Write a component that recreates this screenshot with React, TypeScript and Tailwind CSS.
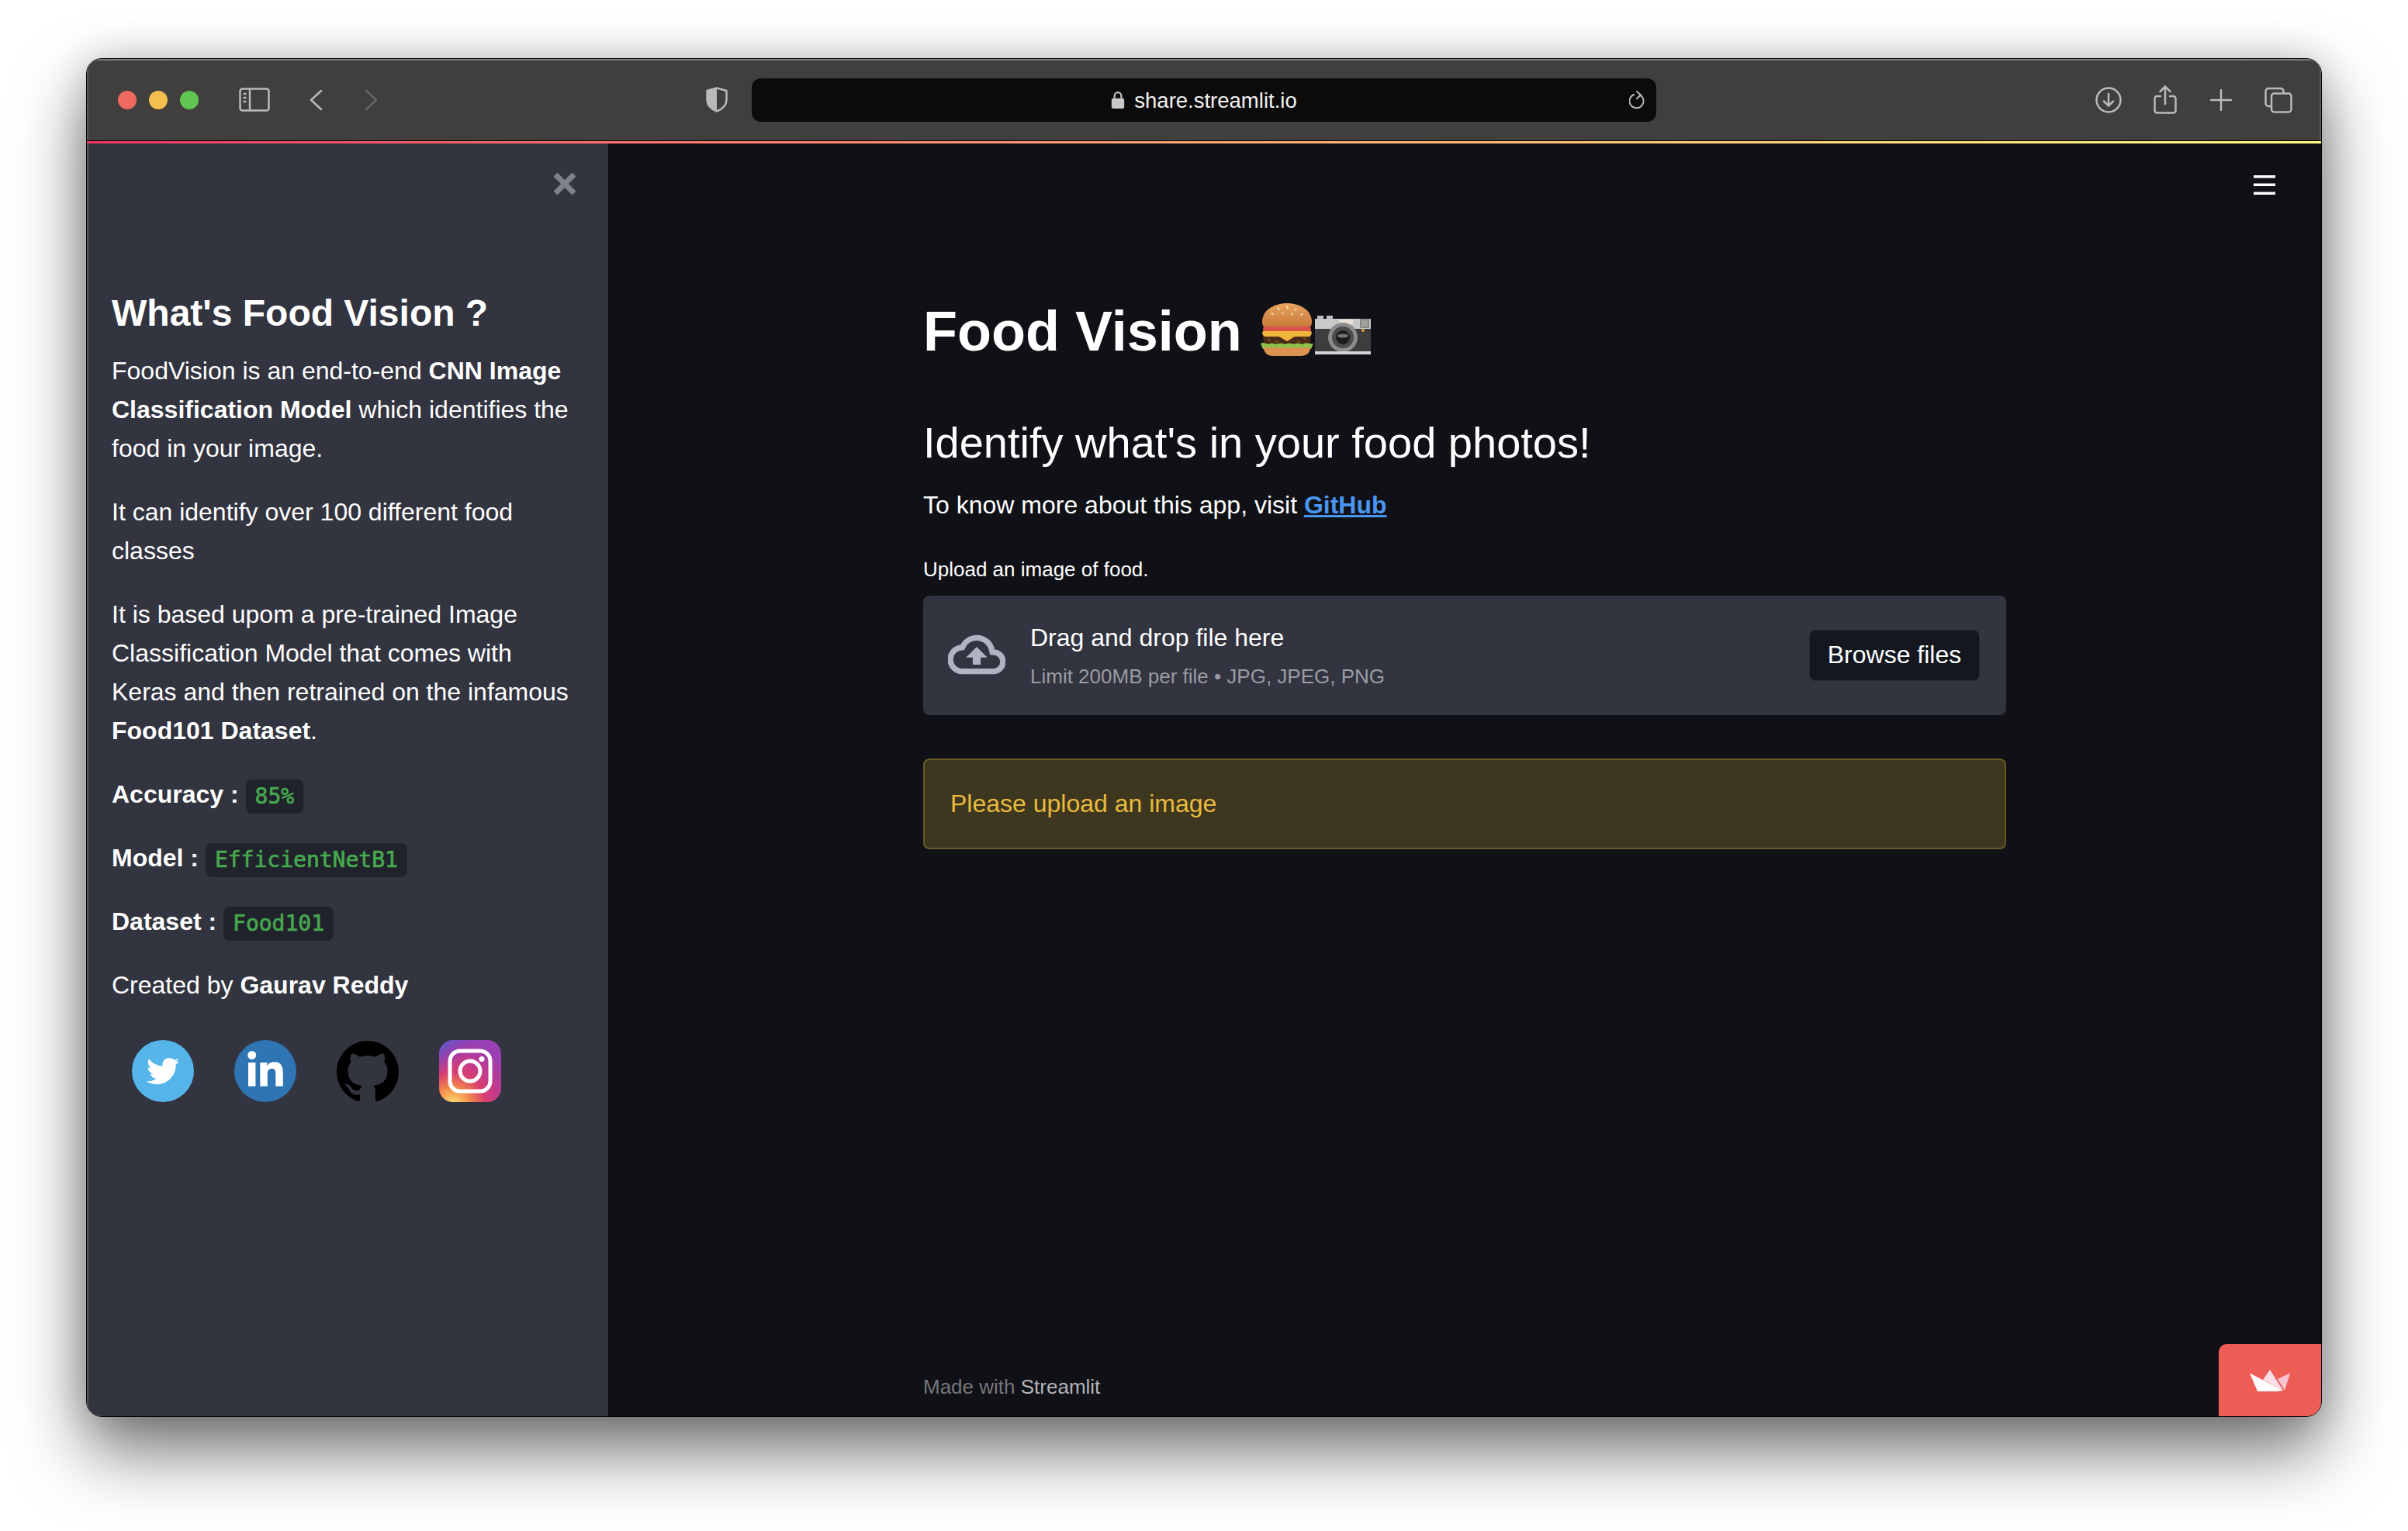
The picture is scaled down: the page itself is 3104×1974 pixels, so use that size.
import { FaLinkedinIn, FaTwitter } from "react-icons/fa";
import { SiGithub } from "react-icons/si";

const Toolbar = () => {
  return (
    <div className="flex h-[105px] shrink-0 items-center bg-[#403f3d] text-[#b9b9b9] shadow-[inset_0_2px_0_#7d7d7b,inset_2px_0_0_#5a5a58,inset_-2px_0_0_#5a5a58]">
      <div className="ml-[40px] flex gap-[16px]">
        <span className="h-6 w-6 rounded-full bg-[#ee6a5f]" />
        <span className="h-6 w-6 rounded-full bg-[#f5bf4f]" />
        <span className="h-6 w-6 rounded-full bg-[#61c554]" />
      </div>
      <svg className="ml-[52px]" width="40" height="31" viewBox="0 0 40 31" fill="none" stroke="currentColor" strokeWidth="2.5">
        <rect x="1.5" y="1.5" width="37" height="28" rx="3" />
        <path d="M14 2v27M5.5 8h4M5.5 13h4M5.5 18h4" />
      </svg>
      <svg className="ml-[50px]" width="18" height="28" viewBox="0 0 18 28" fill="none" stroke="currentColor" strokeWidth="2.5" strokeLinecap="round">
        <path d="M16 2 3 14l13 12" />
      </svg>
      <svg className="ml-[54px] text-[#666665]" width="18" height="28" viewBox="0 0 18 28" fill="none" stroke="currentColor" strokeWidth="2.5" strokeLinecap="round">
        <path d="m2 2 13 12L2 26" />
      </svg>
      <svg className="ml-[422px]" width="28" height="33" viewBox="0 0 28 33" fill="none">
        <path d="M14 1.5 26.5 5v12c0 7-5.5 11.5-12.5 14.5C7 28.5 1.5 24 1.5 17V5z" stroke="currentColor" strokeWidth="2.5" strokeLinejoin="round" />
        <path d="M14 1.5 1.5 5v12c0 7 5.5 11.5 12.5 14.5z" fill="currentColor" />
      </svg>
      <div className="relative ml-[31px] flex h-[56px] w-[1166px] items-center justify-center rounded-[12px] bg-[#0b0b0b]">
        <svg className="mr-[12px]" width="18" height="24" viewBox="0 0 16 22" fill="#c9c9c9">
          <path d="M3 9V6a5 5 0 0 1 10 0v3h-2V6a3 3 0 0 0-6 0v3z" />
          <rect x="0.5" y="9" width="15" height="12" rx="2" />
        </svg>
        <span className="pt-[2px] text-[27.5px] leading-[32px] text-[#f2f2f2]">share.streamlit.io</span>
        <svg className="absolute right-[14px] top-[16px]" width="21" height="25" viewBox="0 0 21 25" fill="none" stroke="currentColor" strokeWidth="2" strokeLinecap="round">
          <path d="M14 5.5a9 9 0 1 1-8-.5" />
          <path d="m10 1 5 4.5-5 4.5" />
        </svg>
      </div>
      <svg className="ml-[566px]" width="34" height="34" viewBox="0 0 34 34" fill="none" stroke="currentColor" strokeWidth="2.5" strokeLinecap="round">
        <circle cx="17" cy="17" r="15.5" />
        <path d="M17 9v15M11 18.5l6 6 6-6" />
      </svg>
      <svg className="ml-[41px]" width="30" height="37" viewBox="0 0 30 37" fill="none" stroke="currentColor" strokeWidth="2.5" strokeLinecap="round">
        <path d="M9 14H4.5A3 3 0 0 0 1.5 17v15.5a3 3 0 0 0 3 3h21a3 3 0 0 0 3-3V17a3 3 0 0 0-3-3H21" />
        <path d="M15 24V2M8.5 8 15 1.5 21.5 8" />
      </svg>
      <svg className="ml-[43px]" width="28" height="28" viewBox="0 0 28 28" fill="none" stroke="currentColor" strokeWidth="2.5" strokeLinecap="round">
        <path d="M14 1v26M1 14h26" />
      </svg>
      <svg className="ml-[42px]" width="36" height="34" viewBox="0 0 36 34" fill="none" stroke="currentColor" strokeWidth="2.5">
        <path d="M8 25H5a3.5 3.5 0 0 1-3.5-3.5v-16A3.5 3.5 0 0 1 5 2h16a3.5 3.5 0 0 1 3.5 3.5V8" />
        <rect x="9" y="8.5" width="25.5" height="24" rx="3.5" />
      </svg>
    </div>
  );
};

const InstagramIcon = () => {
  return (
    <svg width="80" height="80" viewBox="0 0 80 80">
      <defs>
        <radialGradient id="igWarm" cx="22%" cy="105%" r="105%">
          <stop offset="0" stopColor="#fde08a" />
          <stop offset="0.12" stopColor="#fbc060" />
          <stop offset="0.3" stopColor="#f0804e" />
          <stop offset="0.5" stopColor="#d93f72" />
          <stop offset="0.75" stopColor="#bc3a92" />
          <stop offset="1" stopColor="#9a3fb4" />
        </radialGradient>
        <linearGradient id="igBlue" x1="0" y1="0" x2="0.3" y2="0.35">
          <stop offset="0" stopColor="#4f5fd0" />
          <stop offset="1" stopColor="#7b3fc0" stopOpacity="0" />
        </linearGradient>
      </defs>
      <rect width="80" height="80" rx="18" fill="url(#igWarm)" />
      <rect width="80" height="80" rx="18" fill="url(#igBlue)" />
      <rect x="14" y="14" width="52" height="52" rx="13" fill="none" stroke="#fff" strokeWidth="5" />
      <circle cx="40" cy="40" r="13" fill="none" stroke="#fff" strokeWidth="5" />
      <circle cx="55" cy="24.5" r="3.5" fill="#fff" />
    </svg>
  );
};

const BurgerIcon = () => {
  return (
    <svg width="68" height="68" viewBox="0 0 68 68">
      <defs>
        <linearGradient id="bun" x1="0" y1="0" x2="0" y2="1">
          <stop offset="0" stopColor="#e8a35f" />
          <stop offset="1" stopColor="#c8783a" />
        </linearGradient>
      </defs>
      <path d="M2 24C2 9 17 0 34 0s32 9 32 24c0 6-3 8-7 8H9c-4 0-7-2-7-8z" fill="url(#bun)" />
      <path d="M22 6l2 2M34 4l1 3M46 7l-2 2M14 13l2 1M28 12l1 2M40 13l1 2M54 14l-2 1" stroke="#f8e6c8" strokeWidth="1.5" strokeLinecap="round" />
      <rect x="3" y="30" width="62" height="7" rx="3.5" fill="#d9534a" />
      <path d="M3 38h62l-1 17H4z" fill="#4a2a18" />
      <path d="M10 46l2 2M20 50l2-1M48 49l2 1M56 45l2 1" stroke="#7a4a2c" strokeWidth="2" strokeLinecap="round" />
      <path d="M3 36h62c2 2 0 7-3 7H44l-10 6-10-6H6c-3 0-5-5-3-7z" fill="#f2b53c" />
      <path d="M0 52c4-3 8 2 12 0s7 2 11 0 7 2 11 0 8 2 11 0 8 2 11 0 8 1 12 0l-3 7H3z" fill="#8ac24a" />
      <path d="M4 57h60c0 7-5 11-12 11H16C9 68 4 64 4 57z" fill="#dc9350" />
    </svg>
  );
};

const CameraIcon = () => {
  return (
    <svg width="72" height="50" viewBox="0 0 72 50">
      <rect x="3" y="0" width="8" height="6" fill="#bdbdbd" />
      <rect x="15" y="0" width="8" height="6" fill="#bdbdbd" />
      <rect x="0" y="4" width="72" height="46" rx="1" fill="#c9c9c9" />
      <rect x="0" y="17" width="72" height="29" fill="#3d3d3f" />
      <rect x="31" y="5" width="18" height="6" rx="1" fill="#e8e2d4" />
      <rect x="58" y="4" width="12" height="12" fill="#8a8a86" />
      <rect x="60" y="6" width="8" height="8" fill="#a3a39d" />
      <circle cx="62" cy="19" r="2" fill="#e0a030" />
      <circle cx="36" cy="28" r="19" fill="#8c8c8e" />
      <circle cx="36" cy="28" r="14" fill="#4c4c4e" />
      <circle cx="36" cy="28" r="9" fill="#1c1c1e" />
      <ellipse cx="36" cy="26" rx="7" ry="2.5" fill="#77777a" />
      <rect x="0" y="46" width="72" height="4" fill="#d4d4d4" />
    </svg>
  );
};

const Sidebar = () => {
  return (
    <aside className="flex w-[672px] shrink-0 flex-col bg-[#32343f] pl-[32px] pr-[40px] pt-[38px] text-[32px] leading-[50px] text-white shadow-[inset_2px_0_0_#55565f]">
      <div className="-mr-[12px] flex h-[28px] justify-end pr-[14px]">
        <svg width="28" height="28" viewBox="0 0 28 28" fill="none" stroke="#808289" strokeWidth="7">
          <path d="M2 2l24 24M26 2 2 26" />
        </svg>
      </div>
      <h2 className="mb-[20px] mt-[124px] text-[48px] font-bold leading-[58px]">What's Food Vision ?</h2>
      <p className="mb-8">
        FoodVision is an end-to-end <b>CNN Image Classification Model</b> which identifies the food in your image.
      </p>
      <p className="mb-8">It can identify over 100 different food classes</p>
      <p className="mb-8">
        It is based upom a pre-trained Image Classification Model that comes with Keras and then retrained on the infamous <b>Food101 Dataset</b>.
      </p>
      <p className="mb-8">
        <b>Accuracy : </b>
        <code className="inline-block h-11 rounded-lg bg-[#20232b] px-3 align-middle font-['DejaVu_Sans_Mono',monospace] text-[28px] leading-[44px] text-[#46a84e] [-webkit-text-stroke:0.7px_#46a84e]">85%</code>
      </p>
      <p className="mb-8">
        <b>Model : </b>
        <code className="inline-block h-11 rounded-lg bg-[#20232b] px-3 align-middle font-['DejaVu_Sans_Mono',monospace] text-[28px] leading-[44px] text-[#46a84e] [-webkit-text-stroke:0.7px_#46a84e]">EfficientNetB1</code>
      </p>
      <p className="mb-8">
        <b>Dataset : </b>
        <code className="inline-block h-11 rounded-lg bg-[#20232b] px-3 align-middle font-['DejaVu_Sans_Mono',monospace] text-[28px] leading-[44px] text-[#46a84e] [-webkit-text-stroke:0.7px_#46a84e]">Food101</code>
      </p>
      <p>
        Created by <b>Gaurav Reddy</b>
      </p>
      <div className="ml-[26px] mt-[46px] flex gap-[52px]">
        <span className="flex h-20 w-20 items-center justify-center rounded-full bg-[#55b4e8] text-white">
          <FaTwitter size={42} />
        </span>
        <span className="flex h-20 w-20 items-center justify-center rounded-full bg-[#2f75b3] text-white">
          <FaLinkedinIn size={52} />
        </span>
        <span className="flex h-20 w-20 items-center justify-center text-black">
          <SiGithub size={80} />
        </span>
        <InstagramIcon />
      </div>
    </aside>
  );
};

const Main = () => {
  return (
    <main className="relative flex min-w-0 flex-1 flex-col bg-[#101116] pl-[406px] pr-[406px] pt-[199px] text-white">
      <svg className="absolute right-[59px] top-[41px]" width="28" height="25" viewBox="0 0 28 25" fill="#fff">
        <rect width="28" height="3.5" />
        <rect y="10.5" width="28" height="3.5" />
        <rect y="21.5" width="28" height="3.5" />
      </svg>
      <h1 className="flex h-[86px] items-center text-[72px] font-bold leading-[86px]">
        Food Vision
        <span className="-mt-[4px] ml-[24px] flex items-end">
          <BurgerIcon />
          <span className="mb-[2px] ml-[2px] flex">
            <CameraIcon />
          </span>
        </span>
      </h1>
      <h2 className="mt-[67px] text-[56px] leading-[67px]">Identify what's in your food photos!</h2>
      <p className="mt-[22px] text-[32px] leading-[50.4px]">
        To know more about this app, visit{" "}
        <a className="font-bold text-[#4a96f0] underline">GitHub</a>
      </p>
      <label className="mt-[42px] text-[26px] leading-[32px]">Upload an image of food.</label>
      <div className="mt-[18px] flex h-[154px] items-center rounded-lg bg-[#32343f] pl-8 pr-[34px]">
        <svg className="-mt-[2px] text-[#b0b3c2]" width="74" height="74" viewBox="0 0 24 24" fill="currentColor" stroke="currentColor" strokeWidth="0.4">
          <path d="M19.35 10.04A7.49 7.49 0 0 0 12 4C9.11 4 6.6 5.64 5.35 8.04A5.994 5.994 0 0 0 0 14c0 3.31 2.69 6 6 6h13c2.76 0 5-2.24 5-5 0-2.64-2.05-4.78-4.65-4.96zM19 18H6c-2.21 0-4-1.79-4-4 0-2.05 1.53-3.76 3.56-3.97l1.07-.11.5-.95A5.469 5.469 0 0 1 12 6c2.62 0 4.88 1.86 5.39 4.43l.3 1.5 1.53.11A2.98 2.98 0 0 1 22 15c0 1.65-1.35 3-3 3zM8 13h2.55v3h2.9v-3H16l-4-4z" />
        </svg>
        <div className="ml-[32px] flex-1 pt-[3px]">
          <div className="text-[32px] leading-[50px]">Drag and drop file here</div>
          <div className="text-[26px] leading-[50px] text-[#9a9ba3]">Limit 200MB per file • JPG, JPEG, PNG</div>
        </div>
        <button className="h-[66px] w-[220px] rounded-lg border border-[#262832] bg-[#14171f] pb-[2px] text-[32px] text-white">Browse files</button>
      </div>
      <div className="mt-[56px] flex h-[117px] items-center rounded-lg border-2 border-[#665828] bg-[#3e3720] pb-[2px] pl-[33px] text-[32px] text-[#e9bb3d]">
        Please upload an image
      </div>
      <footer className="mb-[20px] mt-auto text-[26px] leading-[36px] text-[#75767d]">
        Made with <span className="text-[#b4b5ba]">Streamlit</span>
      </footer>
      <div className="absolute bottom-0 right-0 flex h-[93px] w-[132px] items-center justify-center rounded-tl-[10px] bg-[#ee5c56]">
        <svg width="52" height="28" viewBox="0 0 52 28">
          <path d="M17 13 26 0l17 27z" fill="#fbdfe6" />
          <path d="M52 4.5 45 27 36 12z" fill="#f8c4cf" />
          <path d="M0 4.5 43 27l-9 1H10z" fill="#fff" />
        </svg>
      </div>
    </main>
  );
};

const App = () => {
  return (
    <div className="h-[1974px] w-[3104px] overflow-hidden bg-white pl-[111px] pt-[75px] font-['Liberation_Sans',sans-serif]">
      <div className="flex h-[1752px] w-[2882px] flex-col overflow-hidden rounded-[20px] border border-black shadow-[0_44px_90px_rgba(0,0,0,0.55),0_0_50px_rgba(0,0,0,0.18)]">
        <Toolbar />
        <div className="h-[4px] shrink-0 border-t border-black bg-gradient-to-r from-[#f63366] to-[#fffd80]" />
        <div className="flex min-h-0 flex-1">
          <Sidebar />
          <Main />
        </div>
      </div>
    </div>
  );
};

export default App;
